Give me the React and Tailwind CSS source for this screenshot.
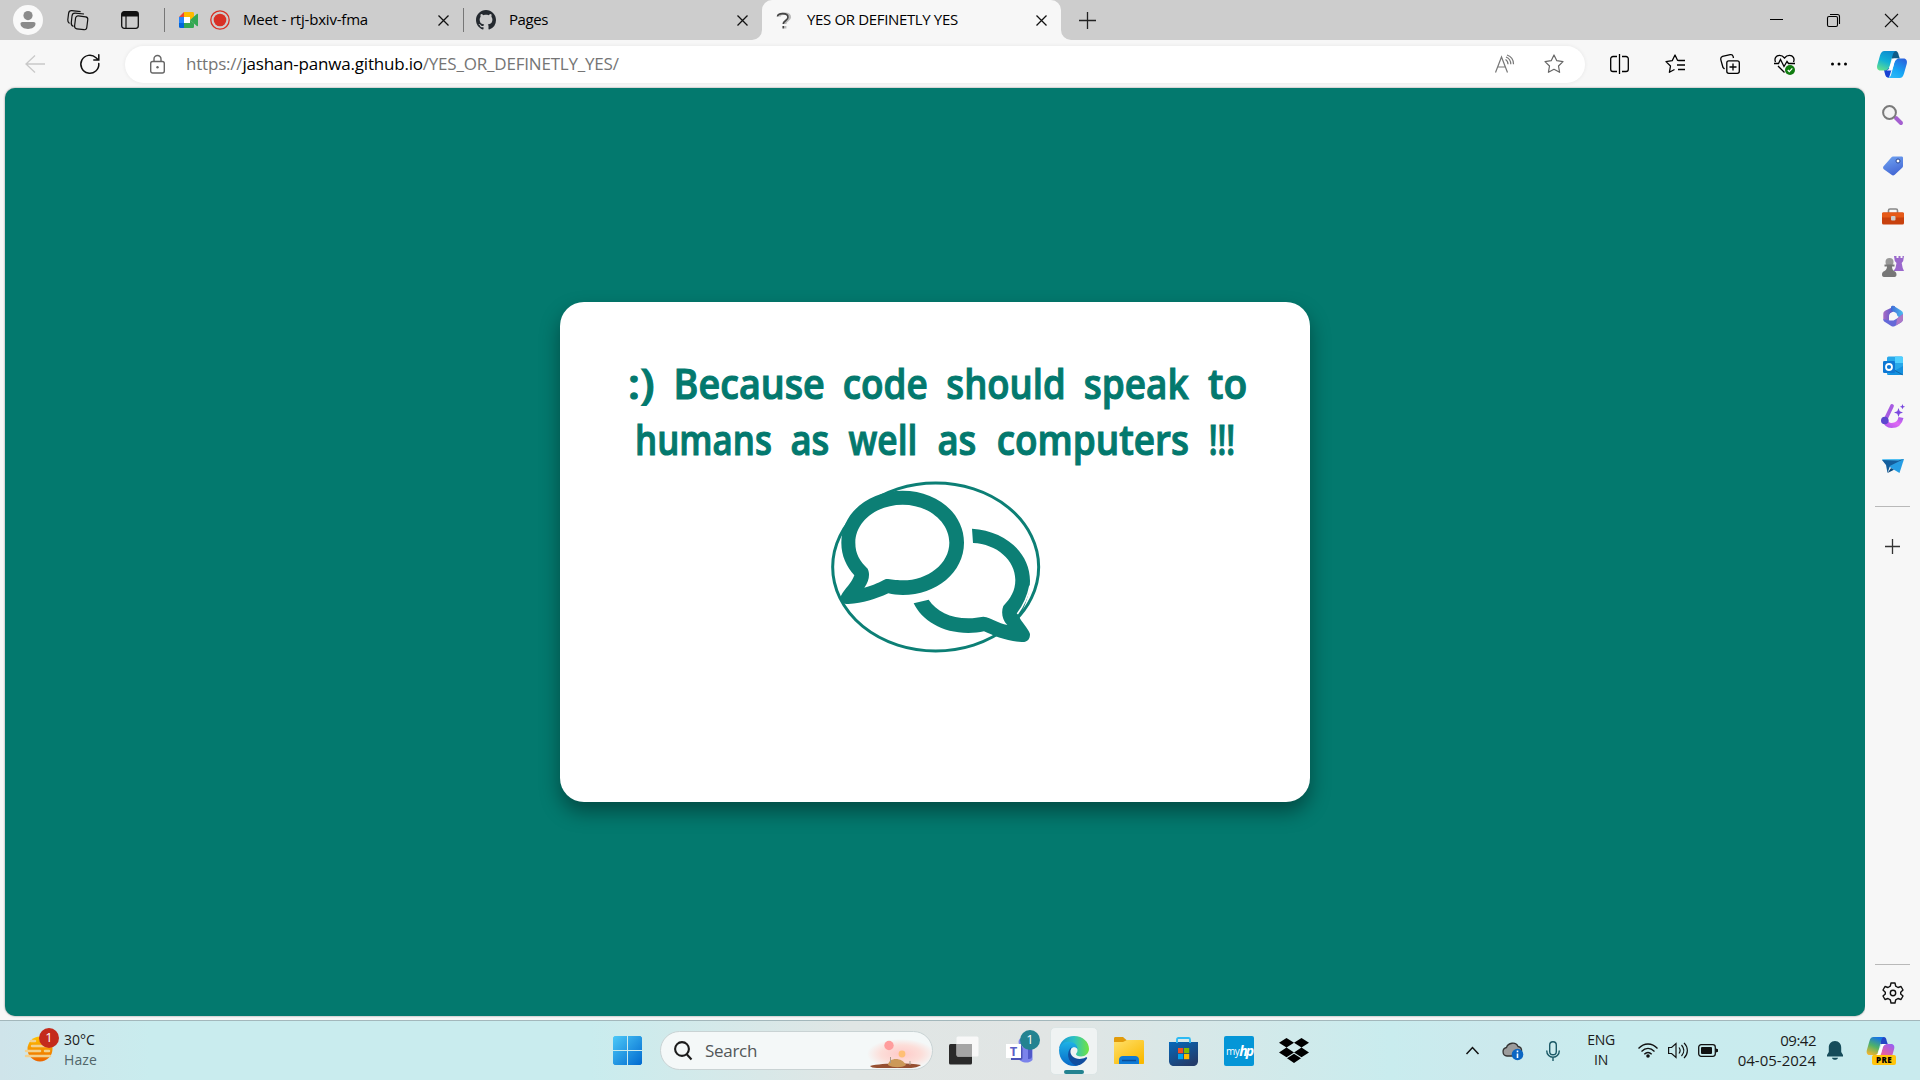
import React from "react";

function Svg({ className = "", children, ...rest }) {
  return (
    <svg className={"block shrink-0 overflow-visible " + className} fill="none" {...rest}>
      {children}
    </svg>
  );
}

function CloseX() {
  return (
    <Svg className="w-[11px] h-[11px]" viewBox="0 0 11 11" stroke="#111" strokeWidth="1.3">
      <path d="M.5.5l10 10M10.5.5l-10 10" />
    </Svg>
  );
}

function TabBar() {
  return (
    <div className="flex h-10 items-center bg-[#cdcdcd] text-[15px] text-black">
      <div className="ml-[13px] flex h-[30px] w-[30px] items-center justify-center rounded-full bg-[#f9f9f9]">
        <Svg className="h-[18px] w-4" viewBox="0 0 16 18" fill="#8b8b8b">
          <circle cx="8" cy="4.6" r="4.6" />
          <path d="M2.5 11h11c1.400 0 2 .8 2 1.800C15.500 16 12 18 8 18S.5 16 .5 12.800c0-1 .6-1.800 2-1.800z" />
        </Svg>
      </div>
      <Svg className="ml-6 h-5 w-[22px]" viewBox="0 0 22 20" stroke="#111" strokeWidth="1.2">
        <rect x="8" y="6.300" width="12.300" height="13" rx="2.500" transform="rotate(7 14 13)" />
        <path d="M6.500 16.500C4.500 15.500 4 14 4.300 12.500L5 6c.2-2 1.500-3 3.200-2.900l8.800.9" />
        <path d="M2.500 13.500C1 12.500.6 11.500.8 9.800L1.600 3.400C1.800 1.600 3 .6 4.800.7l8.800.9" />
      </Svg>
      <Svg className="ml-8 h-[18px] w-[18px]" viewBox="0 0 18 18">
        <rect x=".7" y=".7" width="16.600" height="16.600" rx="2.500" stroke="#111" strokeWidth="1.3" />
        <path d="M.7 5.500V3A2.400 2.400 0 013 .7h12A2.400 2.400 0 0117.300 3v2.500z" fill="#111" />
        <path d="M5 5v12" stroke="#111" strokeWidth="1.200" />
      </Svg>
      <div className="ml-[25px] h-6 w-px bg-[#777]" />
      <Svg className="ml-[14px] h-4 w-[19px]" viewBox="0 0 19 16">
        <path d="M0 5L5 0v5z" fill="#ea4335" />
        <path d="M0 5h5v6H0z" fill="#2684fc" />
        <path d="M0 11h5v5H1.500A1.500 1.500 0 010 14.500z" fill="#0066da" />
        <path d="M5 0h8.500C14.500 0 15 .7 15 1.500V5l-4 3V5H5z" fill="#ffba00" />
        <path d="M5 11h6V8l4 3.500v3c0 1-.6 1.500-1.500 1.500H5z" fill="#34a853" />
        <path d="M5 5h6v6H5z" fill="#fff" />
        <path d="M11 8l6.800-6c.6-.4 1.200 0 1.200.6v10.800c0 .7-.7 1-1.200.5z" fill="#34a853" />
      </Svg>
      <Svg className="ml-3 h-5 w-5" viewBox="0 0 20 20">
        <circle cx="10" cy="10" r="9.200" stroke="#d93025" strokeWidth="1.300" />
        <circle cx="10" cy="10" r="6.300" fill="#d93025" />
      </Svg>
      <div className="-mt-0.5 ml-[13px] w-[195px] whitespace-nowrap tracking-[-0.2px]">Meet - rtj-bxiv-fma</div>
      <CloseX />
      <div className="ml-[14px] h-6 w-px bg-[#777]" />
      <Svg className="ml-3 h-5 w-5" viewBox="0 0 16 16">
        <path fill="#24292f" d="M8 0C3.580 0 0 3.580 0 8c0 3.540 2.290 6.530 5.470 7.590.4.070.55-.17.55-.38 0-.19-.01-.82-.01-1.490-2.010.37-2.530-.49-2.690-.94-.09-.23-.48-.94-.82-1.130-.28-.15-.68-.52-.01-.53.63-.01 1.080.58 1.230.82.72 1.210 1.870.87 2.330.66.07-.52.28-.87.51-1.070-1.780-.2-3.640-.89-3.640-3.950 0-.87.31-1.590.82-2.150-.08-.2-.36-1.020.08-2.120 0 0 .67-.21 2.200.82.64-.18 1.320-.27 2-.27s1.360.09 2 .27c1.530-1.040 2.200-.82 2.200-.82.44 1.100.16 1.920.08 2.120.51.56.82 1.270.82 2.150 0 3.070-1.870 3.750-3.650 3.950.29.25.54.73.54 1.480 0 1.070-.01 1.930-.01 2.200 0 .21.150.46.55.38A8.010 8.010 0 0016 8c0-4.420-3.580-8-8-8z" />
      </Svg>
      <div className="-mt-0.5 ml-[13px] w-[228px] tracking-[-0.45px]">Pages</div>
      <CloseX />
      <Svg className="ml-1 mt-[30px] h-2.5 w-2.5" viewBox="0 0 10 10">
        <path d="M10 0v10H0A10 10 0 0010 0z" fill="#f7f7f7" />
      </Svg>
      <div className="flex h-10 w-[299px] items-center rounded-t-[10px] bg-[#f7f7f7]">
        <Svg className="ml-[14px] h-[17px] w-4" viewBox="0 0 16 17" strokeWidth="2.200">
          <path d="M3.500 4.500c.5-4 10.500-4 10.500.7 0 3.300-4.700 3.200-4.700 6.800M9.300 14v2.500" stroke="#bbb" />
          <path d="M1.500 4.500c.5-4 10.500-4 10.500.7 0 3.300-4.700 3.200-4.700 6.800M7.300 14v2.500" stroke="#444" strokeWidth="1.700" />
        </Svg>
        <div className="-mt-0.5 ml-[15px] w-[229px] whitespace-nowrap tracking-[-0.35px]">YES OR DEFINETLY YES</div>
        <CloseX />
      </div>
      <Svg className="mt-[30px] h-2.5 w-2.5" viewBox="0 0 10 10">
        <path d="M0 0v10h10A10 10 0 010 0z" fill="#f7f7f7" />
      </Svg>
      <Svg className="ml-2 h-[17px] w-[17px]" viewBox="0 0 17 17" stroke="#222" strokeWidth="1.300">
        <path d="M8.500 0v17M0 8.500h17" />
      </Svg>
      <div className="flex-1" />
      <Svg className="h-3 w-[13px]" viewBox="0 0 13 12" stroke="#000" strokeWidth="1">
        <path d="M0 5.500h13" />
      </Svg>
      <Svg className="ml-11 h-[13px] w-[13px]" viewBox="0 0 13 13" stroke="#000" strokeWidth="1.100">
        <rect x=".5" y="2.500" width="10" height="10" rx="1.500" />
        <path d="M3 .5h7.500a2 2 0 012 2V10" />
      </Svg>
      <Svg className="ml-[45px] mr-[22px] h-[13px] w-[13px]" viewBox="0 0 13 13" stroke="#111" strokeWidth="1.100">
        <path d="M0 0l13 13M13 0L0 13" />
      </Svg>
    </div>
  );
}

function Copilot({ id, className, pre }) {
  return (
    <Svg className={className} viewBox="0 0 30 27">
      <defs>
        <linearGradient id={id + "a"} x1=".6" y1="0" x2=".2" y2="1">
          <stop offset="0" stopColor={pre ? "#1573e6" : "#0d8ccf"} />
          <stop offset=".5" stopColor={pre ? "#4fb268" : "#12b1d6"} />
          <stop offset="1" stopColor={pre ? "#f5b52e" : "#63e08c"} />
        </linearGradient>
        <linearGradient id={id + "b"} x1=".8" y1="0" x2=".2" y2="1">
          <stop offset="0" stopColor={pre ? "#9a5ff0" : "#2b63dd"} />
          <stop offset=".6" stopColor={pre ? "#e85fa2" : "#17a7f5"} />
          <stop offset="1" stopColor={pre ? "#f68c50" : "#2fb9f7"} />
        </linearGradient>
      </defs>
      <path d="M15 0h3.500c2 0 2.700 1.500 3.300 4.500l1 3h-8z" fill={pre ? "#2446c4" : "#105c88"} />
      <path d="M8 17h7l-3 9.800c-2.400 0-3.600-1.500-4.200-4.500L7 19z" fill={pre ? "#f2a52c" : "#1742d3"} />
      <path d="M7.500 0H19c-2 .4-2.700 2-3.300 4L13 14c-1 4-2.500 5.500-6 5.500H3.500C.5 19.500-.5 17 .3 14L3 4.500C4 1.500 5 0 7.500 0z" fill={`url(#${id}a)`} />
      <path d="M22.500 27H11c2-.4 2.700-2 3.300-4L17 13c1-4 2.500-5.500 6-5.500h3.500c3 0 4 2.500 3.200 5.500L27 22.500c-1 3-2 4.500-4.500 4.500z" fill={`url(#${id}b)`} />
      <path d="M16.600 7.500h4.500c-2.700.8-3.500 2.500-4.100 5.500l-1.500 5c-.5 1-1 1.500-2.200 1.500H9.500c2.400-.7 3-2.500 3.500-5z" fill="#fff" />
    </Svg>
  );
}

function Toolbar() {
  return (
    <div className="flex h-12 items-center bg-[#f7f7f7]">
      <Svg className="ml-[25px] h-[18px] w-5" viewBox="0 0 20 18" stroke="#c9c9c9" strokeWidth="1.300">
        <path d="M10 .5L1 9l9 8.500M1 9h19" />
      </Svg>
      <Svg className="ml-[35px] h-5 w-5" viewBox="0 0 20 20" stroke="#111" strokeWidth="1.500" strokeLinecap="round">
        <path d="M18.800 9.500A9 9 0 1116 3.700L18.500 6M18.800.8V6h-5" />
      </Svg>
      <div className="ml-[25px] flex h-[37px] w-[1460px] items-center rounded-full bg-white shadow-[0_0_4px_rgba(0,0,0,0.07)]">
        <Svg className="ml-[25px] h-[19px] w-[15px]" viewBox="0 0 15 19" stroke="#666" strokeWidth="1.400">
          <rect x=".7" y="6.500" width="13.600" height="11.500" rx="2" />
          <path d="M4 6.500V4a3.500 3.500 0 017 0v2.500" />
          <circle cx="7.500" cy="12.300" r="1.200" fill="#666" stroke="none" />
        </Svg>
        <div className="ml-[21px] w-[1309px] whitespace-nowrap text-[17px] tracking-[-0.2px] text-[#757575]">
          https://<span className="text-black">jashan-panwa.github.io</span>/YES_OR_DEFINETLY_YES/
        </div>
        <Svg className="h-[19px] w-[19px]" viewBox="0 0 19 19" stroke="#777" strokeWidth="1.200">
          <path d="M.5 17.500L6.500 2l6 15.500M2.500 12h8M10.500 4.500c1.700 1 2.500 2.700 2.500 4.700M11 2c3 1.200 4.800 4 4.800 7.200M12 0c4 1.300 6.500 5 6.500 9.200" />
        </Svg>
        <Svg className="ml-[30px] h-5 w-5" viewBox="0 0 20 20" stroke="#666" strokeWidth="1.200" strokeLinejoin="round">
          <path d="M10 1l2.800 5.700 6.200.9-4.500 4.400 1.100 6.300L10 15.300l-5.600 3L5.500 12 1 7.600l6.200-.9z" />
        </Svg>
      </div>
      <Svg className="ml-[25px] h-5 w-[19px]" viewBox="0 0 19 20" stroke="#000" strokeWidth="1.300">
        <path d="M9.500 0v20M7 2.500H3A2.300 2.300 0 00.7 4.800v10.400A2.300 2.300 0 003 17.500h4M12 2.500h4a2.300 2.300 0 012.300 2.300v10.400a2.300 2.300 0 01-2.300 2.300h-4" />
      </Svg>
      <Svg className="ml-9 h-5 w-5" viewBox="0 0 20 20" stroke="#000" strokeWidth="1.300" strokeLinejoin="round">
        <path d="M14 6.500l-1.500-.2L10 1 7.200 6.700 1 7.600 5.500 12l-1.100 6.300L9.500 15.500M13 6.500h7M12 11h8M13 15.500h7" />
      </Svg>
      <Svg className="ml-[35px] h-5 w-5" viewBox="0 0 20 20" stroke="#000" strokeWidth="1.300">
        <rect x="6.800" y="6.800" width="12.500" height="12.500" rx="2" />
        <path d="M13 9.500v7M9.500 13h7M4.500 15L3 13.500C2 10 1 7 .7 5c0-1.500.6-2.200 1.800-2.600l7.700-1.700c1.500-.3 2.500.3 2.900 1.700l.4 1.600" />
      </Svg>
      <Svg className="ml-[34px] h-5 w-[21px]" viewBox="0 0 21 20" stroke="#000" strokeWidth="1.300">
        <path d="M1.500 8C0 4.500 2 1.300 5.500 1.300c2 0 3.500.7 5 2.700 1.500-2 3-2.700 5-2.700 3.500 0 5.500 3.200 4 6.700M0 9.500h4.500l2-4 3.500 7 3-5 1.500 2H21M4 12l6.500 6.500" />
        <circle cx="16" cy="16" r="5" fill="#107c10" stroke="none" />
        <path d="M13.800 16l1.500 1.600 3-3.200" stroke="#fff" />
      </Svg>
      <Svg className="ml-9 h-1 w-4" viewBox="0 0 16 4" fill="#000">
        <circle cx="1.500" cy="2" r="1.500" /><circle cx="8" cy="2" r="1.500" /><circle cx="14.500" cy="2" r="1.500" />
      </Svg>
      <Copilot id="ct" className="ml-[30px] h-[27px] w-[30px]" />
    </div>
  );
}

function SideIcon({ children }) {
  return (
    <div className="flex h-[50px] w-full items-center justify-center">
      <Svg className="h-[22px] w-[22px]" viewBox="0 0 22 22">{children}</Svg>
    </div>
  );
}

function Sidebar() {
  return (
    <div className="flex w-[55px] flex-col items-center bg-[#f7f7f7] pt-[3px]">
      <SideIcon>
        <path d="M14 13l5 5" stroke="#a45fd0" strokeWidth="4" strokeLinecap="round" />
        <circle cx="7.500" cy="7.500" r="6.400" fill="#f3f3f3" stroke="#7a7a7a" strokeWidth="2" />
      </SideIcon>
      <SideIcon>
        <defs><linearGradient id="tag" x2=".4" y2="1"><stop stopColor="#72a6f3" /><stop offset="1" stopColor="#4569d5" /></linearGradient></defs>
        <path d="M11 1.500h8.500c1 0 1.500.5 1.500 1.500v8c0 .7-.3 1.200-.8 1.700l-7.500 7c-1 1-2.200 1-3.200 0l-7.700-5.500c-1-1-1-2.200 0-3.200l7.700-8.700c.4-.5.800-.8 1.500-.8z" fill="url(#tag)" />
        <circle cx="16" cy="6" r="2" fill="#fff" stroke="#294793" strokeWidth="1" />
      </SideIcon>
      <SideIcon>
        <path d="M6.500 8V5.500c0-1 .5-1.500 1.500-1.500h6c1 0 1.500.5 1.500 1.500V8" stroke="#888" strokeWidth="1.600" />
        <rect y="7.500" width="22" height="12" rx="1.500" fill="#c8410e" />
        <rect y="7.500" width="22" height="5" rx="1" fill="#e65a19" />
        <rect x="9" y="11" width="4.500" height="4.500" rx="1" fill="#ccc" />
      </SideIcon>
      <SideIcon>
        <path d="M12 1h2.500v2h2V1h2v2h2V1H22l-.8 5-1.500 2 1 5 1.300 3H11.500l2-3 1-5-1.700-2z" fill="#9a68cc" />
        <circle cx="7.500" cy="7" r="4" fill="#999" />
        <path d="M2.500 9.500h10v2H10c0 2 .8 3.500 2 4.500 1.500.5 2.500 1.700 2.500 3.500 0 1.500-.6 2.500-2 2.500H2c-1.500 0-2-1-2-2.500C0 17.700 1 16.500 2.500 16 4 15 5 13.500 5 11.500H2.500z" fill="#777" />
      </SideIcon>
      <SideIcon>
        <defs>
          <linearGradient id="ma"><stop stopColor="#a86ac5" /><stop offset="1" stopColor="#4a55cd" /></linearGradient>
          <linearGradient id="mb"><stop stopColor="#3f69d6" /><stop offset="1" stopColor="#4cbdf0" /></linearGradient>
        </defs>
        <path d="M13 1L3.500 5.500C2 6.300 1.300 7.300 1.300 9v5.500L7 16V11l1-2.500 5-3z" fill="url(#ma)" />
        <path d="M9 1.500l2-1 8 5c1.300.8 2 1.700 2 3.300V15l-5.500-4-1.200-3L9 5.500z" fill="url(#mb)" />
        <path d="M21 9v5c0 1.600-.7 2.600-2 3.400l-6 3.500c-1.300.7-2.500.7-3.800 0L3 17c-1.300-.8-1.800-1.500-1.700-3L8 15.500h3.500l3.500-2z" fill="#6569d8" />
        <path d="M21 9v5c0 1.600-.7 2.600-2 3.400l-5 3L15 13.500z" fill="#ae78c7" />
        <circle cx="11" cy="11" r="3.600" fill="#f7f7f7" />
      </SideIcon>
      <SideIcon>
        <rect x="5" y="1.500" width="16" height="18.500" rx="1.500" fill="#28a8ea" />
        <path d="M13 1.500h6.500c1 0 1.500.5 1.500 1.500v5h-8z" fill="#50d0ff" />
        <path d="M5 20l16-9v7.500c0 1-.5 1.500-1.500 1.500z" fill="#1490df" />
        <path d="M5 11l16 9" stroke="#123b6d" strokeWidth=".5" />
        <rect x="1" y="6" width="12" height="12" rx="1.300" fill="#0f78d4" />
        <circle cx="7" cy="12" r="3" stroke="#fff" strokeWidth="1.800" />
      </SideIcon>
      <SideIcon>
        <defs><linearGradient id="brush" x1="0" y1="1" x2="1" y2="0"><stop stopColor="#b658ec" /><stop offset=".5" stopColor="#e06af4" /><stop offset="1" stopColor="#a75bea" /></linearGradient></defs>
        <path d="M3.500 14c0 5 3 6.500 6 6.500 5 0 8.500-3 9.500-8" stroke="url(#brush)" strokeWidth="5" />
        <path d="M3.500 14.500L10 1" stroke="#a85ce2" strokeWidth="3.800" strokeLinecap="round" />
        <circle cx="2.800" cy="15.500" r="3.800" fill="#5d46ce" />
        <path d="M16.500 3l1.200 3.200L21 7.500l-3.300 1.300-1.200 3.200-1.200-3.200L12 7.500l3.300-1.300zM20.500-1l.7 1.900 1.900.8-1.900.7-.7 1.900-.8-1.900-1.800-.7 1.800-.8z" fill="#7a48de" />
      </SideIcon>
      <SideIcon>
        <path d="M0 4.500L22 4l-4.500 14-8.500-5z" fill="#269de4" />
        <path d="M0 4.500L22 4 8 11z" fill="#52c4f5" />
        <path d="M22 4L8 11l-2.500 7-1.500-8L0 5l16 .5z" fill="#145e9d" />
        <path d="M5.500 18L9 13l3 1.800z" fill="#0b4779" />
      </SideIcon>
      <div className="mt-[15px] h-px w-[35px] bg-[#b9b9b9]" />
      <Svg className="mt-8 h-[15px] w-[15px]" viewBox="0 0 15 15" stroke="#333" strokeWidth="1.300">
        <path d="M7.500 0v15M0 7.500h15" />
      </Svg>
      <div className="flex-1" />
      <div className="h-px w-[35px] bg-[#b9b9b9]" />
      <Svg className="mb-4 mt-[17px] h-[22px] w-[22px]" viewBox="0 0 22 22" stroke="#111" strokeWidth="1.400" strokeLinejoin="round">
        <path d="M9 1h4l.7 3.200 2.300 1.300 3-1 2 3.500L18.700 10.200v1.700L21 14l-2 3.500-3-1-2.300 1.300L13 21H9l-.7-3.200L6 16.500l-3 1L1 14l2.300-2.100v-1.700L1 8l2-3.500 3 1 2.300-1.300z" />
        <circle cx="11" cy="11" r="2.700" />
      </Svg>
    </div>
  );
}

function Word({ box, squeeze, children }) {
  return (
    <span className={"flex justify-center whitespace-nowrap " + box}>
      <span className={"inline-block shrink-0 " + squeeze}>{children}</span>
    </span>
  );
}

function Page() {
  return (
    <div className="flex flex-1 items-start bg-[#f7f7f7] pl-[5px]">
      <div className="flex h-[928px] flex-1 justify-center rounded-[10px] bg-[#03796e] shadow-[0_0_2px_rgba(0,0,0,0.5)]">
        <div className="mt-[214px] flex h-[500px] w-[750px] flex-col items-center rounded-[24px] bg-white pt-[53px] shadow-[0_10px_20px_rgba(0,0,0,0.38)]">
          <h1 className="flex flex-col items-center text-[41px] font-semibold leading-[56px] text-[#03796e] [-webkit-text-stroke:1.1px_#03796e]">
            <span className="flex gap-[18.6px] pl-1">
              <Word box="w-[28px]" squeeze="scale-x-110">:)</Word>
              <Word box="w-[151px]" squeeze="scale-x-[0.92]">Because</Word>
              <Word box="w-[85px]" squeeze="scale-x-[0.9]">code</Word>
              <Word box="w-[118px]" squeeze="scale-x-[0.89]">should</Word>
              <Word box="w-[106px]" squeeze="scale-x-[0.9]">speak</Word>
              <Word box="w-[39px]" squeeze="scale-x-[0.95]">to</Word>
            </span>
            <span className="flex gap-[19.6px]">
              <Word box="w-[135px]" squeeze="scale-x-[0.85]">humans</Word>
              <Word box="w-[39px]" squeeze="scale-x-[0.89]">as</Word>
              <Word box="w-[69px]" squeeze="scale-x-[0.86]">well</Word>
              <Word box="w-[39px]" squeeze="scale-x-[0.89]">as</Word>
              <Word box="w-[193px]" squeeze="scale-x-[0.9]">computers</Word>
              <Word box="w-[26px]" squeeze="scale-x-[0.78]">!!!</Word>
            </span>
          </h1>
          <Svg className="mt-[3px] h-[190px] w-[230px]" viewBox="0 0 690 570">
            <ellipse cx="347" cy="291" rx="309" ry="252" stroke="#0c7f75" strokeWidth="9" />
            <path fill="#0c7f75" fillRule="evenodd" d="M248 62C350 62 432 130 432 218S350 375 248 375C232 375 218 373 205 370C165 388 130 400 85 402C66 402 58 390 63 377C75 355 95 340 103 316C80 290 64 258 64 218C64 130 146 62 248 62ZM248 104C170 104 106 155 106 218C106 252 119 272 143 296C151 312 147 335 133 353C160 347 180 335 198 327C215 327 225 331 248 331C325 331 388 280 388 218S325 104 248 104Z" />
            <path fill="#0c7f75" d="M456 176C552 182 630 245 630 333C630 370 615 408 598 441C604 456 625 475 630 492C630 508 622 517 605 516C560 514 520 497 492 484C478 487 462 489 445 489C365 489 305 450 281 400L326 389C348 422 390 445 445 445C462 445 475 441 490 440C515 443 535 460 562 465C546 450 543 425 550 408C572 385 586 362 586 330C586 270 530 222 459 219Z" />
            <path d="M592 432C611 407 624 378 630 347" stroke="#fff" strokeWidth="5" />
          </Svg>
        </div>
      </div>
    </div>
  );
}

function Taskbar() {
  return (
    <div className="flex h-[60px] items-center border-t border-[#a3b7bb] bg-[linear-gradient(90deg,#cfe4ea_0,#c9ecee_150px,#c9ecee_590px,#e0e6e5_850px,#e1e5e4_1060px,#c9ecee_1390px,#cce9ed_1500px,#c9ecee_1600px,#c9ebee_1920px)] text-[14px] text-[#1b1b1b]">
      <div className="relative -mt-[11px] ml-[25px] h-[34px] w-[34px]">
        <Svg className="h-[34px] w-[34px]" viewBox="0 0 34 34">
          <defs><linearGradient id="sun" x2="0" y2="1"><stop stopColor="#ffc400" /><stop offset="1" stopColor="#ec6500" /></linearGradient></defs>
          <circle cx="15" cy="21" r="12.500" fill="url(#sun)" />
          <path d="M6 13h4M7 18h18M1 23h14M20 23h4M1 28h24" stroke="#f2d18f" strokeWidth="2.500" strokeLinecap="round" />
        </Svg>
        <div className="absolute left-[14px] top-0 flex h-5 w-5 items-center justify-center rounded-full bg-[#c42b1c] text-[13px] text-white">1</div>
      </div>
      <div className="-mt-0.5 ml-[5px] w-[549px] leading-5">
        <div>30°C</div>
        <div className="tracking-[0.1px] text-[#51666a]">Haze</div>
      </div>
      <Svg className="h-[29px] w-[29px]" viewBox="0 0 29 29">
        <defs><linearGradient id="win" x2="1" y2="1"><stop stopColor="#4cc9f8" /><stop offset="1" stopColor="#0069cf" /></linearGradient></defs>
        <path d="M1.500 0H14v14H0V1.500zM15 0h12.500L29 1.500V14H15zM0 15h14v14H1.500L0 27.500zM15 15h14v12.500L27.500 29H15z" fill="url(#win)" />
      </Svg>
      <div className="ml-[18px] flex h-[39px] w-[273px] items-center overflow-hidden rounded-full border border-[#c9d3d4] bg-[#f4f8f8]">
        <Svg className="ml-[13px] h-[19px] w-[18px]" viewBox="0 0 18 19" stroke="#1b1b1b" strokeWidth="2.100">
          <circle cx="8" cy="8" r="6.900" /><path d="M12.500 13l5 5.500" />
        </Svg>
        <div className="ml-[13px] w-[161px] text-[17px] tracking-[-0.3px] text-[#525758]">Search</div>
        <Svg className="h-[37px] w-[66px]" viewBox="0 0 66 37">
          <defs><radialGradient id="sky"><stop stopColor="#ffc9c7" /><stop offset=".6" stopColor="#fcded9" /><stop offset="1" stopColor="#fcded9" stopOpacity="0" /></radialGradient></defs>
          <ellipse cx="35" cy="22" rx="34" ry="15" fill="url(#sky)" />
          <circle cx="23" cy="13.500" r="4.700" fill="#ff9d9d" />
          <circle cx="36" cy="22" r="3.400" fill="#ffbf75" />
          <path d="M4 34c12-3 38-3 51-1-3 2-6 3-12 3H11c-4 0-6-1-7-2z" fill="#965032" />
          <path d="M22 33c1-8 14-8 18 0-4 3-13 3-18 0z" fill="#cc9959" />
          <path d="M24.500 25v6M44 29v4" stroke="#a99b8c" />
        </Svg>
      </div>
      <Svg className="ml-4 h-[30px] w-[30px]" viewBox="0 0 30 30">
        <rect y="8" width="23" height="20.500" rx="1.500" fill="#2a2a2a" />
        <rect x="7.500" y=".5" width="22" height="20" rx="1.500" fill="#f8f8f8" />
        <path d="M8 8h15v12.500H9L8 20z" fill="#a5a5a5" />
      </Svg>
      <div className="relative -mt-2 ml-[27px] h-[34px] w-[34px]">
        <Svg className="h-[34px] w-[34px]" viewBox="0 0 34 34">
          <path d="M19 13h7.500v17c-2 2-4 2.500-6 2.500-4 0-8-2-9-6z" fill="#7b83eb" />
          <circle cx="17" cy="12" r="4.500" fill="#7b83eb" />
          <path d="M22 16h4v10c0 2-1 3-3 3h-1z" fill="#5059c9" />
          <path d="M0 14h15v14H0z" fill="#fff" />
          <path d="M15 15l1.500 2v11c0 1-1 2-2 2H5v-2h10z" fill="#4b53b7" />
        </Svg>
        <div className="absolute left-0 top-[14px] w-[15px] text-center text-[13px] font-bold leading-[14px] text-[#5b5fc7]">T</div>
        <div className="absolute left-[14px] top-0 flex h-5 w-5 items-center justify-center rounded-full bg-[#238391] text-[13px] text-white">1</div>
      </div>
      <div className="relative ml-[10px] flex h-12 w-12 items-center justify-center rounded-[5px] border border-[#dce5e5] bg-[#eff3f3]">
        <Svg className="h-[30px] w-[30px]" viewBox="0 0 30 30">
          <defs>
            <linearGradient id="ea"><stop stopColor="#1694d9" /><stop offset=".5" stopColor="#2cc1c3" /><stop offset="1" stopColor="#70e43f" /></linearGradient>
            <linearGradient id="eb" y2="1" x2="0"><stop stopColor="#1db2e6" /><stop offset="1" stopColor="#0869c8" /></linearGradient>
          </defs>
          <path d="M0 14C0 6 7 0 15 0c9 0 15 6 15 13 0 4-3.500 7.500-8 7.500-3 0-5-1-5-2.200s1.500-1.500 1.500-4c0-3-3-5.500-6.500-5.500C7 8.800 0 10 0 14z" fill="url(#ea)" />
          <path d="M0 14c1-6 6-9 11-8 4 0 7.500 3 7.500 7-3-4-8-1-8 4 0 7 7 12 12.500 10-3 2.500-6 3-8 3C7 30 0 24 0 14z" fill="url(#eb)" />
          <path d="M12.500 11C7 16 8 26 17 29.500c5 0 9-3.500 11-7 .5-1-.5-1.500-1.500-1-8 4-16-1-15-7z" fill="#114e9f" />
        </Svg>
        <div className="absolute bottom-0 left-[13px] h-1 w-5 rounded-full bg-[#238391]" />
      </div>
      <Svg className="ml-4 h-[27px] w-[30px]" viewBox="0 0 30 27">
        <defs><linearGradient id="fold" x2=".8" y2="1"><stop stopColor="#ffe06b" /><stop offset="1" stopColor="#fab900" /></linearGradient></defs>
        <path d="M0 1.500C0 .5.5 0 1.500 0H9l4 3.500L9 8H0z" fill="#e19b0b" />
        <path d="M0 5h9l4-2h15.500c1 0 1.500.6 1.500 1.500V26c0 .7-.3 1-1 1H1c-.7 0-1-.3-1-1z" fill="url(#fold)" />
        <path d="M5 27v-4c0-2.500 1.500-4 4-4h12c2.500 0 4 1.500 4 4v4z" fill="#0f7ad5" /><path d="M8 23.500h14" stroke="#0a4d98" strokeWidth="1.500" />
      </Svg>
      <Svg className="ml-[25px] h-[30px] w-[29px]" viewBox="0 0 29 30">
        <defs><linearGradient id="store" x2=".6" y2="1"><stop stopColor="#0569bb" /><stop offset="1" stopColor="#233c6b" /></linearGradient></defs>
        <path d="M0 6h29v19c0 3-2 5-5 5H5c-3 0-5-2-5-5z" fill="url(#store)" />
        <path d="M8 7V3.500C8 2.500 8.500 2 9.500 2h10c1 0 1.500.5 1.500 1.500V7" stroke="#2cbaf3" strokeWidth="1.800" />
        <path d="M9 12h5.200v5.200H9z" fill="#f25022" /><path d="M15 12h5.200v5.200H15z" fill="#7fba00" /><path d="M9 18h5.200v5.200H9z" fill="#00a4ef" /><path d="M15 18h5.200v5.200H15z" fill="#ffb900" />
      </Svg>
      <div className="ml-[26px] flex h-[30px] w-[30px] items-center justify-center rounded-[2px] bg-[#0496d7] text-white">
        <span className="text-[10px] leading-3 tracking-[-0.5px]">my</span>
        <span className="text-[14px] font-bold italic leading-3 tracking-[-2px]">hp</span>
      </div>
      <Svg className="ml-[25px] h-[25px] w-[30px]" viewBox="0 0 30 25" fill="#000">
        <path d="M7.500 0L15 4.800 7.500 9.600 0 4.800zM22.500 0L30 4.800l-7.500 4.800L15 4.800zM7.500 9.600L15 14.400l-7.500 4.800L0 14.400zM22.500 9.600l7.500 4.800-7.500 4.800-7.500-4.800zM15 15.800l7 4.500L15 25l-7-4.700z" />
      </Svg>
      <div className="flex-1" />
      <Svg className="h-2 w-[13px]" viewBox="0 0 13 8" stroke="#111" strokeWidth="1.500"><path d="M.5 7l6-6.500 6 6.500" /></Svg>
      <Svg className="ml-6 h-[18px] w-5" viewBox="0 0 20 18">
        <path d="M4 14a4.300 4.300 0 01-.5-8.500C5 .5 13-.5 15 4.500c2.500.5 4 2.500 3.500 5.500L13 14z" fill="#9c9c9c" stroke="#333" strokeWidth="1.300" />
        <circle cx="14.500" cy="12.500" r="5.800" fill="#0b66c3" /><path d="M14.500 11.500v4.500M14.500 8.500v1.700" stroke="#fff" strokeWidth="1.600" />
      </Svg>
      <Svg className="ml-[23px] h-5 w-[14px]" viewBox="0 0 14 20" stroke="#1b5966" strokeWidth="1.400">
        <rect x="3.700" y=".7" width="6.600" height="13" rx="3.300" /><path d="M.7 9.500c0 9 12.600 9 12.600 0M7 16v4" />
      </Svg>
      <div className="-mt-px ml-[26px] w-[30px] text-center leading-5 tracking-[-0.25px]"><div>ENG</div><div>IN</div></div>
      <Svg className="ml-[22px] h-[15px] w-5" viewBox="0 0 20 15" stroke="#111" strokeWidth="1.300">
        <path d="M.5 5.500c5.500-6 13.500-6 19 0M3.500 8.500c4-4 9-4 13 0M6.300 11.300c2.300-2.300 5.100-2.300 7.400 0" /><circle cx="10" cy="13" r="1.800" fill="#111" stroke="none" />
      </Svg>
      <Svg className="ml-[10px] h-[17px] w-5" viewBox="0 0 20 17" stroke="#111" strokeWidth="1.200">
        <path d="M.6 5.500h3L8 1.500v14l-4.400-4h-3zM11 5.500c1.500 2 1.500 4 0 6M13.500 3c3 3.500 3 7.500 0 11M16 .8c4.500 4.500 4.500 10.900 0 15.400" />
      </Svg>
      <Svg className="ml-[10px] h-[13px] w-5" viewBox="0 0 20 13">
        <rect x=".7" y=".7" width="16.600" height="11.600" rx="2.500" stroke="#111" strokeWidth="1.300" /><rect x="3" y="3" width="11" height="7" rx="1" fill="#111" /><path d="M18 4.500l2 .7v2.600l-2 .7z" fill="#111" />
      </Svg>
      <div className="-mt-0.5 ml-3 w-[86px] text-right text-[15px] leading-5"><div className="tracking-[-0.5px]">09:42</div><div className="whitespace-nowrap">04-05-2024</div></div>
      <Svg className="ml-[11px] h-[19px] w-4" viewBox="0 0 16 19" fill="#164c5a">
        <path d="M8 0c4 0 6.200 3 6.200 6.500V11l1.800 3v1.500H0V14l1.800-3V6.500C1.800 3 4 0 8 0zM5 16.800h6C10.500 19.500 5.500 19.500 5 16.800z" />
      </Svg>
      <div className="relative ml-[23px] mr-[24px] h-7 w-[30px]">
        <Copilot id="cb" pre className="h-[25px] w-[29px]" />
        <div className="absolute left-[6px] top-[18px] flex h-[10px] w-[24px] items-center justify-center rounded-[2px] bg-[#ffc40c] text-[8px] font-extrabold leading-none tracking-[0.3px] text-black">PRE</div>
      </div>
    </div>
  );
}

export default function App() {
  return (
    <div className="flex h-[1080px] w-[1920px] flex-col overflow-hidden font-['Open_Sans','Noto_Sans',sans-serif]">
      <TabBar />
      <Toolbar />
      <div className="flex h-[932px] shrink-0">
        <Page />
        <Sidebar />
      </div>
      <Taskbar />
    </div>
  );
}
